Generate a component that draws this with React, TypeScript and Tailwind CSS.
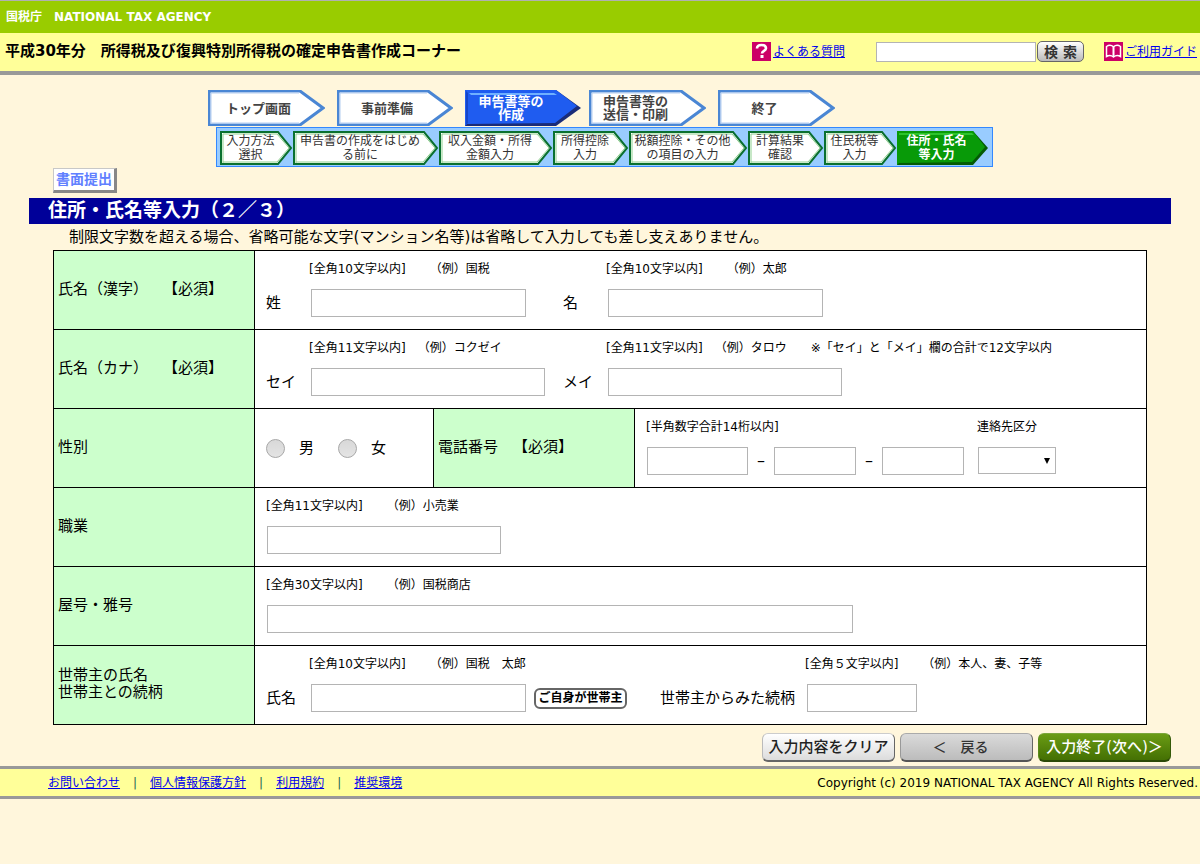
import React from "react";
import clsx from "clsx";

interface Step {
  lines: string[];
  width: number;
  active?: boolean;
  className?: string;
  textClass?: string;
}

const mainSteps: Step[] = [
  { lines: ["トップ画面"], width: 117, className: "mr-3", textClass: "pr-4" },
  { lines: ["事前準備"], width: 116, className: "mr-3", textClass: "pr-4" },
  { lines: ["申告書等の", "作成"], width: 116, active: true, className: "mr-2", textClass: "pr-6" },
  { lines: ["申告書等の", "送信・印刷"], width: 117, className: "mr-3", textClass: "pr-6" },
  { lines: ["終了"], width: 117, textClass: "pr-6" },
];

const subSteps: Step[] = [
  { lines: ["入力方法", "選択"], width: 73 },
  { lines: ["申告書の作成をはじめ", "る前に"], width: 146 },
  { lines: ["収入金額・所得", "金額入力"], width: 114 },
  { lines: ["所得控除", "入力"], width: 76 },
  { lines: ["税額控除・その他", "の項目の入力"], width: 119 },
  { lines: ["計算結果", "確認"], width: 76 },
  { lines: ["住民税等", "入力"], width: 73 },
  { lines: ["住所・氏名", "等入力"], width: 91, active: true },
];

const footerLinks = ["お問い合わせ", "個人情報保護方針", "利用規約", "推奨環境"];

function MainStep({ lines, width: w, active, className, textClass }: Step) {
  return (
    <li className={clsx("grid", className)}>
      <svg width={w} height={36} className="[grid-area:1/1]" aria-hidden="true">
        {active ? (
          <>
            <polygon points={`0,0 ${w - 25},0 ${w},18 ${w - 25},36 0,36`} fill="#1a2c78" />
            <polygon points={`0,0 ${w - 25},0 ${w - 4},16 ${w - 26},33 2,34 0,36`} fill="#1f5cf0" />
            <polygon points={`4,3 ${w - 27},3 ${w - 24},5 6,5`} fill="#6fb0ff" />
            <polygon points="1,1 3,3 3,33 1,35" fill="#1646c8" />
          </>
        ) : (
          <>
            <polygon
              points={`1,1 ${w - 25},1 ${w - 2},18 ${w - 25},35 1,35`}
              fill="#fff"
              stroke="#4a86d4"
              strokeWidth="3"
            />
            <polyline points={`3,34 3,3 ${w - 26},3`} fill="none" stroke="#b4cdf0" />
            <polyline points={`3,33 ${w - 26},33`} fill="none" stroke="#b4cdf0" />
          </>
        )}
      </svg>
      <span
        className={clsx(
          "[grid-area:1/1] self-center text-center text-[13px] leading-[13px] font-bold",
          textClass,
          active ? "text-white" : "text-[#444]"
        )}
      >
        {lines.map((line) => (
          <span key={line} className="block">{line}</span>
        ))}
      </span>
    </li>
  );
}

function SubStep({ lines, width: w, active }: Step) {
  return (
    <li className="grid">
      <svg width={w} height={34} className="[grid-area:1/1]" aria-hidden="true">
        {active ? (
          <>
            <polygon points={`0,0 ${w - 15},0 ${w},17 ${w - 15},34 0,34`} fill="#045a04" />
            <polygon points={`0,0 ${w - 15},0 ${w - 3},16 ${w - 16},31 2,32 0,34`} fill="#089a08" />
            <polygon points={`2,2 ${w - 16},2 ${w - 14},4 2,4`} fill="#2cc42c" />
          </>
        ) : (
          <>
            <polygon
              points={`1,1 ${w - 15},1 ${w - 2},17 ${w - 15},33 1,33`}
              fill="#fff"
              stroke="#0a7030"
              strokeWidth="2"
            />
            <polyline
              points={`3,32 3,3 ${w - 16},3 ${w - 4},17 ${w - 16},31 3,31`}
              fill="none"
              stroke="#8fd08f"
            />
          </>
        )}
      </svg>
      <span
        className={clsx(
          "[grid-area:1/1] self-center pr-3 text-center text-xs leading-[14px] whitespace-nowrap",
          active ? "font-bold text-white" : "text-[#333]"
        )}
      >
        {lines.map((line) => (
          <span key={line} className="block">{line}</span>
        ))}
      </span>
    </li>
  );
}

function HeadCell({ children }: { children: React.ReactNode }) {
  return (
    <th
      scope="row"
      className="border border-black bg-[#ccffcc] pb-0.5 pl-1 text-left text-[15px] leading-[17px] font-normal"
    >
      {children}
    </th>
  );
}

function Cell({ children, colSpan }: { children: React.ReactNode; colSpan?: number }) {
  return (
    <td colSpan={colSpan} className="h-[79px] border border-black bg-white pl-[11px]">
      {children}
    </td>
  );
}

interface FieldProps {
  id: string;
  hint: string;
  label?: string;
  ariaLabel?: string;
  width: string;
  labelWidth?: string;
  className?: string;
  children?: React.ReactNode;
}

function Field({ id, hint, label, ariaLabel, width, labelWidth = "w-[43px]", className, children }: FieldProps) {
  return (
    <div className={clsx("flex items-end", className)}>
      {label && (
        <label htmlFor={id} className={clsx("shrink-0 pb-0.5 text-[15px] leading-6 whitespace-nowrap", labelWidth)}>
          {label}
        </label>
      )}
      <div>
        <p className="h-5 text-xs leading-5 whitespace-pre">{hint}</p>
        <div className={clsx("mt-2.5 flex items-center gap-2", label ? "ml-0.5" : "ml-px")}>
          <TextBox id={id} className={width} aria-label={ariaLabel} />
          {children}
        </div>
      </div>
    </div>
  );
}

function TextBox({ className, ...rest }: React.InputHTMLAttributes<HTMLInputElement>) {
  return <input type="text" className={clsx("h-7 border border-[#b4b4b4] bg-white px-1 text-sm", className)} {...rest} />;
}

function Gender({ id, label }: { id: string; label: string }) {
  return (
    <span className="flex items-center gap-3.5">
      <input
        type="radio"
        id={id}
        name="gender"
        className="size-[19px] appearance-none rounded-full border border-[#a8a8a8] bg-linear-to-b from-[#d8d8d8] to-[#e4e4e4] checked:bg-[#666]"
      />
      <label htmlFor={id} className="text-[15px] leading-5">{label}</label>
    </span>
  );
}

function Header() {
  return (
    <header>
      <div className="h-[33px] border-t border-[#b0b0b0] bg-[#99cc00] px-1.5 text-xs leading-8 font-bold text-white">
        国税庁　NATIONAL TAX AGENCY
      </div>
      <div className="flex h-[42px] items-start justify-between border-b-4 border-[#999] bg-[#ffff99] pr-[3px] pl-[5px]">
        <h1 className="text-[15px] leading-9 font-bold">
          平成30年分　所得税及び復興特別所得税の確定申告書作成コーナー
        </h1>
        <div className="flex items-center pt-2">
          <svg width="19" height="19" viewBox="0 0 19 19" aria-hidden="true">
            <rect width="19" height="19" fill="#cc0066" />
            <path d="M5 6.5C5 3.8 7 3 9.5 3s4.5 1 4.5 3.3c0 2.5-4 2.6-4 5.2" fill="none" stroke="#fff" strokeWidth="2.6" />
            <rect x="8.5" y="13" width="3" height="3" fill="#fff" />
          </svg>
          <a href="#faq" className="ml-0.5 text-xs text-[#0000ee] underline">よくある質問</a>
          <input type="text" aria-label="検索" className="ml-[31px] h-5 w-40 border border-[#b4b4b4] bg-white px-1 text-xs" />
          <button
            type="button"
            className="ml-px h-[21px] w-[47px] rounded-[5px] border border-[#666] bg-linear-to-b from-white to-[#bbb] text-sm leading-none font-bold text-[#333]"
          >
            検 索
          </button>
          <svg width="19" height="19" viewBox="0 0 19 19" className="ml-5" aria-hidden="true">
            <rect width="19" height="19" fill="#cc0066" />
            <path
              d="M2.5 4.500C4.500 3 7.500 3 9.500 4.800C11.500 3 14.500 3 16.500 4.500V14.500C14.500 13.300 11.500 13.300 9.500 15C7.500 13.300 4.500 13.300 2.500 14.500z"
              fill="none"
              stroke="#fff"
              strokeWidth="1.5"
            />
            <path d="M9.500 4.500V15" stroke="#fff" strokeWidth="2" />
          </svg>
          <a href="#guide" className="ml-0.5 text-xs text-[#0000ee] underline">ご利用ガイド</a>
        </div>
      </div>
    </header>
  );
}

function App() {
  return (
    <div className="min-h-screen bg-[#fff6dc] font-['DejaVu_Sans','Noto_Sans_CJK_JP',sans-serif] text-black [text-spacing-trim:space-all]">
      <Header />
      <main className="mx-[29px]">
        <nav aria-label="作成の流れ" className="pt-[15px]">
          <ol className="ml-[179px] flex">
            {mainSteps.map((step, i) => (
              <MainStep key={i} {...step} />
            ))}
          </ol>
          <ol className="mt-px ml-[187px] flex h-10 w-fit border border-[#3388ff] bg-[#99ccff] pt-[3px] pr-1 pb-px pl-[3px]">
            {subSteps.map((step, i) => (
              <SubStep key={i} {...step} />
            ))}
          </ol>
        </nav>

        <p className="mt-px ml-6 h-[25px] w-fit border-t border-r-3 border-b-3 border-l border-[#c8c8c8] border-r-[#888] border-b-[#888] bg-white px-0.5 text-sm leading-[21px] font-bold text-[#6080ff]">
          書面提出
        </p>
        <h2 className="mt-[5px] h-[26px] bg-[#000099] pl-[19px] text-[19px] leading-[24px] font-bold text-white">
          住所・氏名等入力（２／３）
        </h2>
        <p className="pl-10 text-[15px] leading-[26px]">
          制限文字数を超える場合、省略可能な文字(マンション名等)は省略して入力しても差し支えありません。
        </p>

        <form onSubmit={(e) => e.preventDefault()}>
          <div className="px-6">
            <table className="w-full table-fixed border-collapse border border-black">
              <colgroup>
                <col className="w-[201px]" />
                <col className="w-[179px]" />
                <col className="w-[201px]" />
                <col />
              </colgroup>
              <tbody>
                <tr>
                  <HeadCell>氏名（漢字）　【必須】</HeadCell>
                  <Cell colSpan={3}>
                    <div className="flex pb-1">
                      <Field id="sei" label="姓" hint="[全角10文字以内]　　（例）国税" width="w-[215px]" className="w-[297px]" />
                      <Field id="mei" label="名" hint="[全角10文字以内]　　（例）太郎" width="w-[215px]" />
                    </div>
                  </Cell>
                </tr>
                <tr>
                  <HeadCell>氏名（カナ）　【必須】</HeadCell>
                  <Cell colSpan={3}>
                    <div className="flex pb-1">
                      <Field id="sei-kana" label="セイ" hint="[全角11文字以内]　（例）コクゼイ" width="w-[234px]" className="w-[297px]" />
                      <Field
                        id="mei-kana"
                        label="メイ"
                        hint="[全角11文字以内]　（例）タロウ　　※「セイ」と「メイ」欄の合計で12文字以内"
                        width="w-[234px]"
                      />
                    </div>
                  </Cell>
                </tr>
                <tr>
                  <HeadCell>性別</HeadCell>
                  <Cell>
                    <div className="flex items-center gap-6">
                      <Gender id="male" label="男" />
                      <Gender id="female" label="女" />
                    </div>
                  </Cell>
                  <HeadCell>電話番号　【必須】</HeadCell>
                  <Cell>
                    <div className="flex pb-1">
                      <Field id="tel1" ariaLabel="電話番号 1" hint="[半角数字合計14桁以内]" width="w-[101px]" className="w-[331px]">
                        <span className="w-2.5 text-center">–</span>
                        <TextBox className="w-[82px]" aria-label="電話番号 2" />
                        <span className="w-2.5 text-center">–</span>
                        <TextBox className="w-[82px]" aria-label="電話番号 3" />
                      </Field>
                      <div>
                        <label htmlFor="contact" className="block h-5 text-xs leading-5">連絡先区分</label>
                        <div className="mt-2.5 ml-px grid w-[78px] items-center">
                          <select id="contact" className="h-[27px] appearance-none border border-[#b4b4b4] bg-white text-sm [grid-area:1/1]">
                            <option></option>
                          </select>
                          <svg width="6" height="6" className="pointer-events-none mr-1.5 justify-self-end [grid-area:1/1]" aria-hidden="true">
                            <path d="M0 0h6L3 6z" />
                          </svg>
                        </div>
                      </div>
                    </div>
                  </Cell>
                </tr>
                <tr>
                  <HeadCell>職業</HeadCell>
                  <Cell colSpan={3}>
                    <Field id="job" ariaLabel="職業" hint="[全角11文字以内]　　（例）小売業" width="w-[234px]" className="pb-1" />
                  </Cell>
                </tr>
                <tr>
                  <HeadCell>屋号・雅号</HeadCell>
                  <Cell colSpan={3}>
                    <Field id="trade" ariaLabel="屋号・雅号" hint="[全角30文字以内]　　（例）国税商店" width="w-[586px]" className="pb-1" />
                  </Cell>
                </tr>
                <tr>
                  <HeadCell>
                    世帯主の氏名
                    <br />
                    世帯主との続柄
                  </HeadCell>
                  <Cell colSpan={3}>
                    <div className="flex pb-1">
                      <Field id="head" label="氏名" hint="[全角10文字以内]　　（例）国税　太郎" width="w-[215px]" className="w-[394px]">
                        <button
                          type="button"
                          className="h-[21px] w-[93px] rounded-md border-2 border-[#666] bg-white text-xs leading-none font-bold whitespace-nowrap"
                        >
                          ご自身が世帯主
                        </button>
                      </Field>
                      <Field
                        id="relation"
                        label="世帯主からみた続柄"
                        labelWidth="w-[145px]"
                        hint="[全角５文字以内]　　（例）本人、妻、子等"
                        width="w-[110px]"
                      />
                    </div>
                  </Cell>
                </tr>
              </tbody>
            </table>
          </div>

          <div className="flex justify-end gap-[5px] pt-2 pb-1">
            <button
              type="reset"
              className="h-[29px] w-[133px] rounded-md border border-t-[#ccc] border-r-[#666] border-b-2 border-b-[#666] border-l-[#bbb] bg-linear-to-b from-white to-[#dcdcdc] text-[15px] leading-none font-medium whitespace-nowrap text-[#222]"
            >
              入力内容をクリア
            </button>
            <button
              type="button"
              className="h-[29px] w-[133px] rounded-md border border-t-[#aaa] border-r-[#666] border-b-2 border-b-[#555] border-l-[#999] bg-linear-to-b from-[#dadada] to-[#bcbcbc] pr-3 text-sm leading-none font-medium text-[#333]"
            >
              ＜　戻る
            </button>
            <button
              type="submit"
              className="h-[29px] w-[133px] rounded-md border border-t-[#7aa63a] border-r-[#345a08] border-b-2 border-b-[#2c4a06] border-l-[#5a8a1a] bg-linear-to-b from-[#6a9c14] to-[#447004] text-[15px] leading-none font-medium whitespace-nowrap text-white"
            >
              入力終了(次へ)＞
            </button>
          </div>
        </form>
      </main>

      <footer className="flex h-[33px] items-center justify-between border-y-3 border-[#999] bg-[#ffff99] pr-0.5 pl-12 text-xs">
        <ul className="flex">
          {footerLinks.map((link, i) => (
            <li key={link}>
              {i > 0 && <span className="px-[13px] text-[#226655]">|</span>}
              <a href="#footer" className="text-[#0000ee] underline">{link}</a>
            </li>
          ))}
        </ul>
        <p>Copyright (c) 2019 NATIONAL TAX AGENCY All Rights Reserved.</p>
      </footer>
    </div>
  );
}

export default App;
